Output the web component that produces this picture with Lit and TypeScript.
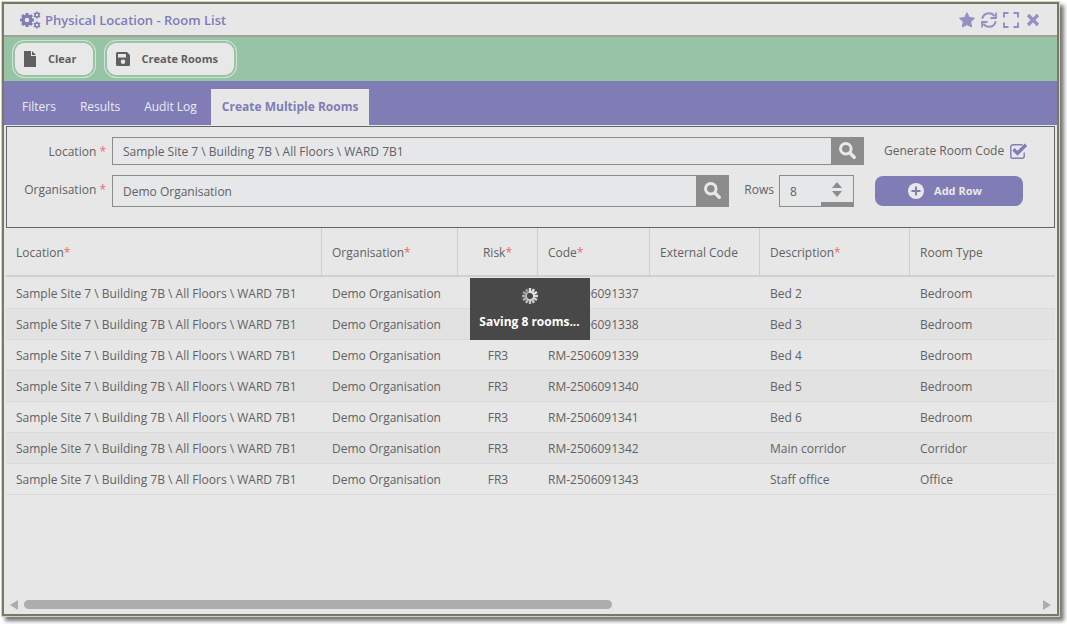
import { LitElement, html, css, svg } from "lit";
import { customElement, property, state } from "lit/decorators.js";

const SITE = "Sample Site 7 \\ Building 7B \\ All Floors \\ WARD 7B1";
const ORG = "Demo Organisation";

const ROOMS = [
  ["RM-2506091337", "Bed 2", "Bedroom"],
  ["RM-2506091338", "Bed 3", "Bedroom"],
  ["RM-2506091339", "Bed 4", "Bedroom"],
  ["RM-2506091340", "Bed 5", "Bedroom"],
  ["RM-2506091341", "Bed 6", "Bedroom"],
  ["RM-2506091342", "Main corridor", "Corridor"],
  ["RM-2506091343", "Staff office", "Office"],
];

const COLUMNS = [
  { name: "Location", required: true, cls: "c-location" },
  { name: "Organisation", required: true, cls: "c-organisation" },
  { name: "Risk", required: true, cls: "c-risk" },
  { name: "Code", required: true, cls: "c-code" },
  { name: "External Code", required: false, cls: "c-external" },
  { name: "Description", required: true, cls: "c-description" },
  { name: "Room Type", required: false, cls: "c-type" },
];

const teeth = (cx: number, cy: number, r: number, w: number, n: number) =>
  Array.from(
    { length: n },
    (_, i) =>
      svg`<rect x=${cx - w / 2} y=${cy - r} width=${w} height=${r / 2} transform="rotate(${(i * 360) / n} ${cx} ${cy})" fill="currentColor" stroke="none"/>`
  );

const cogs = html`<svg width="21" height="18" viewBox="0 0 21 18" aria-hidden="true">
  <g fill="none" stroke="currentColor">
    <circle cx="7" cy="9" r="3.9" stroke-width="3.2" />
    ${teeth(7, 9, 7, 3, 8)}
    <circle cx="17" cy="4" r="2" stroke-width="1.6" />
    ${teeth(17, 4, 3.6, 1.5, 6)}
    <circle cx="17" cy="14" r="2" stroke-width="1.6" />
    ${teeth(17, 14, 3.6, 1.5, 6)}
  </g>
</svg>`;

const star = html`<svg width="16" height="16" viewBox="0 0 16 16" aria-hidden="true">
  <path fill="currentColor" stroke="currentColor" stroke-linejoin="round" d="M8 .7l2.300 4.700 5.200.8-3.800 3.600.9 5.200L8 12.600 3.400 15l.9-5.200L.5 6.200l5.200-.8z" />
</svg>`;

const refresh = html`<svg width="16" height="16" viewBox="0 0 16 16" aria-hidden="true">
  <g fill="none" stroke="currentColor" stroke-width="2">
    <path d="M1.200 6.800C2 3.500 4.800 1.200 8 1.200c2.400 0 4.400 1.100 5.700 3" />
    <path d="M14.800 9.200c-.8 3.300-3.600 5.600-6.800 5.600-2.400 0-4.400-1.100-5.700-3" />
    <path d="M15 .4V6H9.400M1 15.600V10h5.600" stroke-width="1.800" />
  </g>
</svg>`;

const expand = html`<svg width="16" height="16" viewBox="0 0 16 16" aria-hidden="true">
  <path fill="none" stroke="currentColor" stroke-width="2" d="M1 5.500V1h4.500M10.500 1H15v4.500M15 10.500V15h-4.500M5.500 15H1v-4.500" />
</svg>`;

const close = html`<svg width="14" height="14" viewBox="0 0 14 14" aria-hidden="true">
  <path fill="none" stroke="currentColor" stroke-width="3.400" d="M2 2l10 10M12 2L2 12" />
</svg>`;

const file = html`<svg width="12" height="16" viewBox="0 0 12 16" aria-hidden="true">
  <path fill="currentColor" d="M0 0h7v5h5v11H0zM8 0l4 4H8z" />
</svg>`;

const save = html`<svg width="14" height="14" viewBox="0 0 14 14" aria-hidden="true">
  <path fill="currentColor" fill-rule="evenodd" d="M1.500 0H11l3 3v9.500a1.500 1.500 0 0 1-1.500 1.500h-11A1.500 1.500 0 0 1 0 12.500v-11A1.500 1.500 0 0 1 1.500 0zM2 2v3.500h8V2zM7 7.500a2.200 2.200 0 1 0 0 4.500 2.200 2.200 0 0 0 0-4.500z" />
</svg>`;

const search = html`<svg width="17" height="17" viewBox="0 0 17 17" aria-hidden="true">
  <g fill="none" stroke="currentColor">
    <circle cx="6.800" cy="6.800" r="5.300" stroke-width="3" />
    <path d="M11 11l4.200 4.200" stroke-width="3.400" stroke-linecap="round" />
  </g>
</svg>`;

const plus = html`<svg width="16" height="16" viewBox="0 0 16 16" aria-hidden="true">
  <circle cx="8" cy="8" r="8" fill="currentColor" />
  <path class="cut" fill="none" stroke-width="2" d="M8 3.500v9M3.500 8h9" />
</svg>`;

const tick = html`<svg class="tick" width="18" height="16" viewBox="0 0 18 16" aria-hidden="true">
  <path fill="none" stroke="currentColor" stroke-width="1.400" d="M12.500 1.800H2.800a2 2 0 0 0-2 2v9.400a2 2 0 0 0 2 2h9.400a2 2 0 0 0 2-2V9.500" />
  <path fill="none" stroke="currentColor" stroke-width="3.400" d="M3.500 6.300l4 4 8.500-8.500" />
</svg>`;

const SPOKES = [1, 1, 1, 0.95, 0.9, 0.85, 0.8, 0.75, 0.7, 0.65, 0.6, 0.5];
const spinner = html`<svg width="16" height="16" viewBox="0 0 16 16" aria-hidden="true">
  ${SPOKES.map(
    (o, i) =>
      svg`<path d="M8 0v5" stroke="#fff" stroke-width="2.400" stroke-opacity=${o * 0.85} transform="rotate(${i * 30} 8 8)"/>`
  )}
</svg>`;

const base = css`
  * {
    box-sizing: border-box;
  }
  svg {
    display: block;
    flex: none;
  }
  button,
  input {
    font: inherit;
    color: inherit;
    margin: 0;
    padding: 0;
    border: 0;
    background: none;
  }
  .star {
    color: #ee6a6a;
  }
`;

@customElement("search-field")
export class SearchField extends LitElement {
  @property() value = "";
  @property() label = "";

  static styles = [
    base,
    css`
      :host {
        display: flex;
        flex: 1;
        min-width: 0;
        gap: 6px;
      }
      .label {
        width: 99px;
        flex: none;
        text-align: right;
        line-height: 30px;
      }
      .box {
        display: flex;
        flex: 1;
        min-width: 0;
        border: 1px solid #8c8c8c;
        background: #e5e7e9;
      }
      .text {
        flex: 1;
        min-width: 0;
        padding: 2px 10px 0;
      }
      .go {
        display: flex;
        justify-content: center;
        align-items: center;
        width: 32px;
        padding-bottom: 2px;
        background: #8c8c8c;
        color: #e8e8e8;
      }
    `,
  ];

  render() {
    return html`
      <label class="label" for="text">${this.label} <span class="star">*</span></label>
      <div class="box">
        <input class="text" id="text" .value=${this.value} />
        <button class="go" aria-label="Search ${this.label}">${search}</button>
      </div>
    `;
  }
}

@customElement("app-root")
export class AppRoot extends LitElement {
  @state() private tab = "Create Multiple Rooms";

  static styles = [
    base,
    css`
      :host {
        display: flex;
        height: 100vh;
        box-sizing: border-box;
        padding: 2px 8px 8px 2px;
        background: #fff;
        color: #626262;
        font: 12px/18px "Open Sans", sans-serif;
      }
      .window {
        position: relative;
        display: flex;
        flex-direction: column;
        flex: 1;
        min-width: 0;
        border: 2px solid #7a7960;
        background: #e7e7e7;
        box-shadow: 0 0 0 1px #d2d2cc, 4px 4px 4px 1px #777;
      }
      .title {
        display: flex;
        align-items: center;
        gap: 4px;
        height: 33px;
        padding: 0 16px;
        border-bottom: 2px solid #a09f93;
        color: #807cb6;
      }
      .heading {
        flex: 1;
        margin: 0;
        font-size: 13px;
        font-weight: 600;
      }
      .tools {
        display: flex;
        align-items: center;
        gap: 6px;
        color: #9490c6;
      }
      .tool {
        display: flex;
        justify-content: center;
        width: 16px;
      }
      .actions {
        display: flex;
        gap: 8px;
        height: 44px;
        padding: 3px 8px;
        background: #96c4a5;
      }
      .action {
        display: flex;
        align-items: center;
        gap: 12px;
        height: 38px;
        padding: 0 18px 0 11px;
        border: 1px solid #d3e2d7;
        border-radius: 12px;
        background: #e8e8e8;
        box-shadow: inset 0 0 0 2px #96c4a5;
        color: #606060;
        font-size: 11px;
        font-weight: 700;
      }
      .tabs {
        display: flex;
        align-items: flex-end;
        gap: 4px;
        height: 44px;
        padding: 0 8px;
        background: #807cb6;
      }
      .tab {
        height: 36px;
        padding: 0 10px;
        color: #ececf2;
      }
      .tab.on {
        padding: 0 11px;
        background: #e7e7e7;
        color: #807cb6;
        font-weight: 700;
      }
      .form {
        display: flex;
        flex-direction: column;
        gap: 10px;
        margin: 1px 2px 0;
        padding: 10px 0 20px;
        border: 1px solid #66666a;
      }
      .line {
        display: flex;
      }
      .line.first {
        height: 28px;
      }
      .line.second {
        height: 32px;
      }
      .side {
        display: flex;
        align-items: center;
        width: 190px;
        flex: none;
        padding-left: 20px;
      }
      .side.wide {
        width: 200px;
        padding-left: 21px;
      }
      .check {
        display: grid;
        grid-template-columns: auto 18px;
        align-items: center;
        gap: 6px;
        line-height: 30px;
      }
      .checkbox {
        appearance: none;
        grid-area: 1 / 2;
        width: 18px;
        height: 16px;
      }
      .tick {
        grid-area: 1 / 2;
        color: #807cb6;
        pointer-events: none;
      }
      .rows {
        display: flex;
        gap: 5px;
        padding-left: 15px;
        line-height: 30px;
      }
      .stepper {
        display: flex;
        width: 75px;
        border: 1px solid #8c8c8c;
        background: #e5e7e9;
      }
      .count {
        width: 41px;
        padding: 2px 0 0 10px;
        appearance: textfield;
      }
      .count::-webkit-inner-spin-button {
        appearance: none;
      }
      .arrows {
        display: flex;
        flex-direction: column;
        align-items: center;
        justify-content: center;
        gap: 3px;
        flex: 1;
        border-bottom: 4px solid #8c8c8c;
        color: #8c8c8c;
      }
      .add {
        display: flex;
        align-items: center;
        justify-content: center;
        gap: 10px;
        width: 148px;
        height: 30px;
        padding-right: 8px;
        border-radius: 8px;
        background: #807cb6;
        color: #e8e8e8;
        font-size: 11px;
        font-weight: 700;
      }
      .cut {
        stroke: #807cb6;
      }
      .grid {
        flex: 1;
        min-height: 0;
        overflow: hidden;
        margin: 0 2px;
      }
      .table {
        width: 100%;
        table-layout: fixed;
        border-collapse: separate;
        border-spacing: 0;
        border-bottom: 1px solid #d9d9d9;
      }
      .head {
        height: 49px;
        padding: 2px 10px 0;
        border-bottom: 2px solid #d0d0d0;
        border-right: 1px solid #cecece;
        font-weight: 400;
        text-align: left;
      }
      .head:last-child {
        border-right: 0;
      }
      .cell {
        height: 31px;
        padding: 2px 10px 0;
        border-top: 1px solid #dadada;
        white-space: nowrap;
      }
      .row:first-child .cell {
        border-top-color: #e7e7e7;
      }
      .row:nth-child(even) {
        background: #e2e2e2;
      }
      .c-location {
        width: 316px;
      }
      .c-organisation {
        width: 136px;
      }
      .c-risk {
        width: 80px;
        text-align: center;
      }
      .c-code {
        width: 112px;
      }
      .c-external {
        width: 110px;
      }
      .c-description {
        width: 150px;
      }
      .scroll {
        display: flex;
        align-items: center;
        gap: 6px;
        height: 19px;
        padding: 0 6px;
        color: #adadad;
      }
      .track {
        flex: 1;
      }
      .thumb {
        width: 58%;
        height: 9px;
        border-radius: 5px;
        background: #adadad;
      }
      .busy {
        position: absolute;
        top: 50%;
        left: 50%;
        display: flex;
        flex-direction: column;
        align-items: center;
        gap: 9px;
        width: 120px;
        height: 62px;
        margin: -31px 0 0 -61px;
        padding-top: 10px;
        background: #484848;
        color: #fff;
        font-weight: 700;
        white-space: nowrap;
      }
    `,
  ];

  render() {
    return html`
      <main class="window">
        <header class="title">
          ${cogs}
          <h1 class="heading">Physical Location - Room List</h1>
          <div class="tools">
            <button class="tool" aria-label="Favourite">${star}</button>
            <button class="tool" aria-label="Refresh">${refresh}</button>
            <button class="tool" aria-label="Full screen">${expand}</button>
            <button class="tool" aria-label="Close">${close}</button>
          </div>
        </header>
        <div class="actions">
          <button class="action">${file} Clear</button>
          <button class="action">${save} Create Rooms</button>
        </div>
        <nav class="tabs">
          ${["Filters", "Results", "Audit Log", "Create Multiple Rooms"].map(
            (t) => html`<button class="tab ${t === this.tab ? "on" : ""}" @click=${() => (this.tab = t)}>${t}</button>`
          )}
        </nav>
        <section class="form">
          <div class="line first">
            <search-field label="Location" .value=${SITE}></search-field>
            <div class="side">
              <label class="check">
                Generate Room Code
                <input class="checkbox" type="checkbox" checked />
                ${tick}
              </label>
            </div>
          </div>
          <div class="line second">
            <search-field label="Organisation" .value=${ORG}></search-field>
            <div class="rows">
              <label for="count">Rows</label>
              <div class="stepper">
                <input class="count" id="count" type="number" value="8" />
                <div class="arrows">
                  <button aria-label="More rows">
                    <svg width="10" height="6" viewBox="0 0 10 6"><path fill="currentColor" d="M5 0l5 6H0z" /></svg>
                  </button>
                  <button aria-label="Fewer rows">
                    <svg width="10" height="6" viewBox="0 0 10 6"><path fill="currentColor" d="M5 6l5-6H0z" /></svg>
                  </button>
                </div>
              </div>
            </div>
            <div class="side wide">
              <button class="add">${plus} Add Row</button>
            </div>
          </div>
        </section>
        <div class="grid">
          <table class="table">
            <thead>
              <tr>
                ${COLUMNS.map(
                  (c) =>
                    html`<th class="head ${c.cls}">${c.name}${c.required ? html`<span class="star">*</span>` : ""}</th>`
                )}
              </tr>
            </thead>
            <tbody>
              ${ROOMS.map(
                ([code, description, type]) => html`<tr class="row">
                  <td class="cell">${SITE}</td>
                  <td class="cell">${ORG}</td>
                  <td class="cell c-risk">FR3</td>
                  <td class="cell">${code}</td>
                  <td class="cell"></td>
                  <td class="cell">${description}</td>
                  <td class="cell">${type}</td>
                </tr>`
              )}
            </tbody>
          </table>
        </div>
        <div class="scroll">
          <svg width="8" height="10" viewBox="0 0 8 10"><path fill="currentColor" d="M8 0v10L0 5z" /></svg>
          <div class="track"><div class="thumb"></div></div>
          <svg width="8" height="10" viewBox="0 0 8 10"><path fill="currentColor" d="M0 0v10l8-5z" /></svg>
        </div>
        <div class="busy" role="status">${spinner}<span>Saving 8 rooms...</span></div>
      </main>
    `;
  }
}
